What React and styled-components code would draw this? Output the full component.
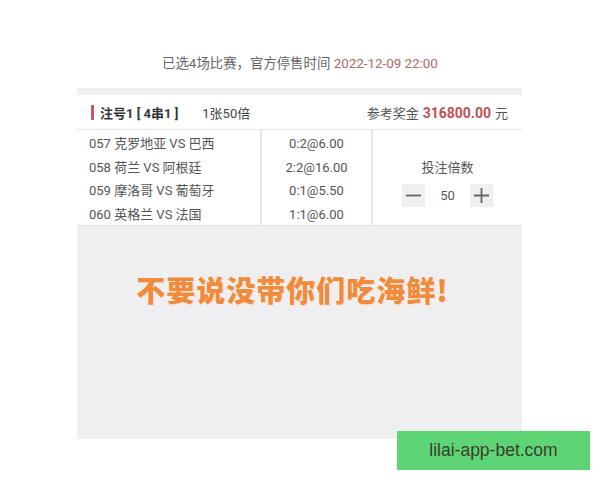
import React from "react";
import styled, { createGlobalStyle } from "styled-components";

const Global = createGlobalStyle`
  html, body { margin: 0; padding: 0; background: #fff; }
  body { font-family: Roboto, "Noto Sans CJK SC", sans-serif; width: 600px; height: 480px; overflow: hidden; }
`;

const Page = styled.div`
  position: relative;
  width: 600px;
  height: 480px;
  padding-top: 55px;
  box-sizing: border-box;
`;

const Notice = styled.div`
  text-align: center;
  font-size: 13.4px;
  line-height: 18px;
  color: #666;
  height: 18px;
  margin-bottom: 15px;
`;

const Date = styled.span`
  color: #b2676a;
`;

const Card = styled.div`
  margin-left: 77px;
  width: 445px;
  background: #efeff2;
  padding-top: 7px;
`;

const Header = styled.div`
  display: flex;
  align-items: center;
  height: 34px;
  background: #fff;
  border-bottom: 1px solid #e4e4e6;
  padding: 0 14px 0 14px;
  font-size: 13px;
  color: #444;
`;

const Bar = styled.span`
  width: 3px;
  height: 15px;
  background: #c9595c;
  margin-right: 6px;
`;

const Title = styled.span`
  font-weight: bold;
  color: #333;
  margin-right: 24px;
`;

const Count = styled.span`
  color: #444;
`;

const Prize = styled.span`
  margin-left: auto;
  color: #555;
`;

const Amount = styled.span`
  color: #c34f52;
  font-weight: bold;
  font-size: 14px;
  margin: 0 4px;
`;

const Table = styled.div`
  display: grid;
  grid-template-columns: 185px 111px 1fr;
  background: #fff;
  height: 95px;
  border-bottom: 1px solid #e0e0e2;
`;

const Col = styled.div`
  display: flex;
  flex-direction: column;
  justify-content: center;
  padding: 2px 0 0;
  border-right: ${(p) => (p.$line ? "2px solid #e6e6e8" : "none")};
  align-items: ${(p) => (p.$center ? "center" : "flex-start")};
  padding-left: ${(p) => (p.$center ? "0" : "12px")};
`;

const Cell = styled.div`
  font-size: 13px;
  line-height: 23.5px;
  color: #555;
  white-space: nowrap;
`;

const Stepper = styled.div`
  display: flex;
  flex-direction: column;
  align-items: center;
  justify-content: center;
  gap: 8px;
  padding-top: 8px;
`;

const StepLabel = styled.div`
  font-size: 13px;
  color: #555;
`;

const StepRow = styled.div`
  display: flex;
  align-items: center;
`;

const StepBtn = styled.div`
  width: 23px;
  height: 23px;
  background: #efeff1;
  display: flex;
  align-items: center;
  justify-content: center;
`;

const StepVal = styled.div`
  width: 45px;
  text-align: center;
  font-size: 13px;
  color: #555;
`;

const Banner = styled.div`
  height: 213px;
  display: flex;
  justify-content: center;
  padding-top: 45px;
  box-sizing: border-box;
`;

const Slogan = styled.div`
  font-family: "Noto Sans CJK SC", sans-serif;
  font-weight: 900;
  font-size: 29px;
  line-height: 36px;
  letter-spacing: 1px;
  color: #f28a3c;
  margin-left: -14px;
  text-shadow: 0 0 2px #fff, 1px 1px 0 #fbd9bf;
`;

const Watermark = styled.div`
  position: absolute;
  left: 397px;
  top: 431px;
  width: 193px;
  height: 39px;
  background: #5dd574;
  display: flex;
  align-items: center;
  justify-content: center;
  font-family: "Liberation Sans", sans-serif;
  font-size: 17.5px;
  color: #3d3d2e;
`;

const Minus = () => (
  <svg width="17" height="17" viewBox="0 0 17 17">
    <path d="M1 8.5H16" stroke="#666" strokeWidth="1.8" />
  </svg>
);
const Plus = () => (
  <svg width="17" height="17" viewBox="0 0 17 17">
    <path d="M1 8.5H16M8.5 1V16" stroke="#666" strokeWidth="1.8" />
  </svg>
);

const games = [
  ["057 克罗地亚 VS 巴西", "0:2@6.00"],
  ["058 荷兰 VS 阿根廷", "2:2@16.00"],
  ["059 摩洛哥 VS 葡萄牙", "0:1@5.50"],
  ["060 英格兰 VS 法国", "1:1@6.00"],
];

export default function App() {
  return (
    <Page>
      <Global />
      <Notice>
        已选4场比赛，官方停售时间 <Date>2022-12-09 22:00</Date>
      </Notice>
      <Card>
        <Header>
          <Bar />
          <Title>注号1 [ 4串1 ]</Title>
          <Count>1张50倍</Count>
          <Prize>
            参考奖金<Amount>316800.00</Amount>元
          </Prize>
        </Header>
        <Table>
          <Col $line>
            {games.map((g) => (
              <Cell key={g[0]}>{g[0]}</Cell>
            ))}
          </Col>
          <Col $line $center>
            {games.map((g) => (
              <Cell key={g[1]}>{g[1]}</Cell>
            ))}
          </Col>
          <Stepper>
            <StepLabel>投注倍数</StepLabel>
            <StepRow>
              <StepBtn><Minus /></StepBtn>
              <StepVal>50</StepVal>
              <StepBtn><Plus /></StepBtn>
            </StepRow>
          </Stepper>
        </Table>
        <Banner>
          <Slogan>不要说没带你们吃海鲜!</Slogan>
        </Banner>
      </Card>
      <Watermark>lilai-app-bet.com</Watermark>
    </Page>
  );
}
